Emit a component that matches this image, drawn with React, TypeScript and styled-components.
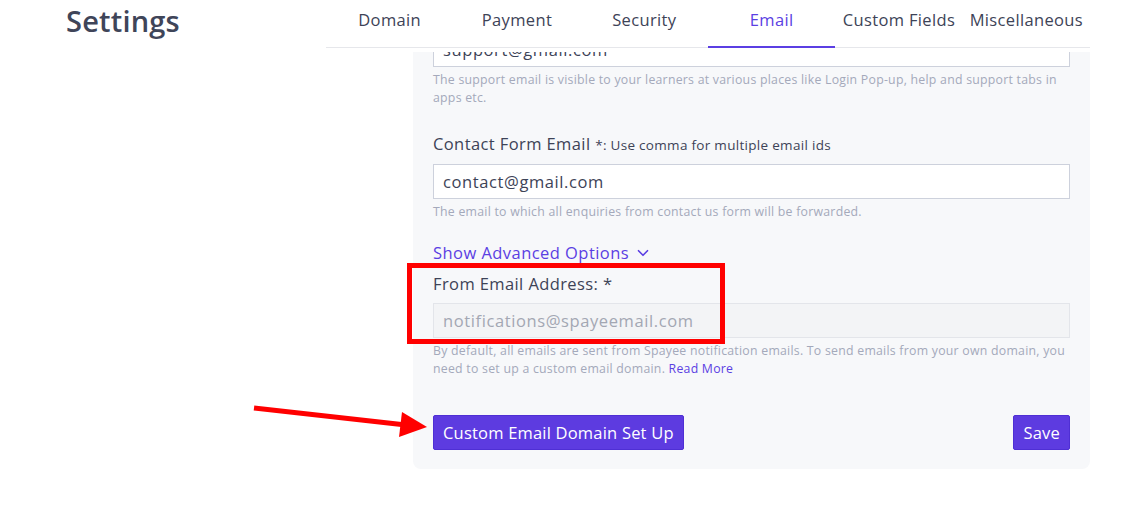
import React from "react";
import styled, { createGlobalStyle } from "styled-components";
import { ChevronDown } from "lucide-react";

const GlobalStyle = createGlobalStyle`
  body {
    margin: 0;
    background: #ffffff;
    font-family: "Open Sans", "Liberation Sans", sans-serif;
    color: #3d4357;
  }
  * {
    box-sizing: border-box;
  }
`;

const Page = styled.div`
  position: relative;
  display: flex;
  width: 1132px;
  height: 505px;
  overflow: hidden;
`;

const Side = styled.div`
  width: 326px;
  flex-shrink: 0;
  padding-left: 66px;
`;

const Title = styled.h1`
  margin: 0;
  padding-top: 1px;
  font-size: 29px;
  line-height: 40px;
  font-weight: 600;
  letter-spacing: 0.2px;
  color: #3f4559;
`;

const Main = styled.div`
  width: 764px;
  display: flex;
  flex-direction: column;
`;

const Tabs = styled.div`
  display: grid;
  grid-template-columns: repeat(6, 1fr);
  height: 48px;
  border-bottom: 1px solid #e6e7eb;
`;

const Tab = styled.div<{ active?: boolean }>`
  display: flex;
  align-items: flex-start;
  justify-content: center;
  padding-top: 8px;
  font-size: 16.5px;
  line-height: 24px;
  letter-spacing: 0.35px;
  white-space: nowrap;
  color: ${(p) => (p.active ? "#5b3fe3" : "#3d4357")};
  border-bottom: 2px solid ${(p) => (p.active ? "#5b3fe3" : "transparent")};
  margin-bottom: -1px;
`;

const Panel = styled.div`
  margin: 4px 0 0 87px;
  height: 417px;
  background: #f7f8fa;
  border-radius: 0 0 8px 8px;
  padding: 0 20px 20px;
  overflow: hidden;
  display: flex;
  flex-direction: column;
`;

const Field = styled.div<{ gap?: number }>`
  display: flex;
  flex-direction: column;
  margin-top: ${(p) => p.gap ?? 0}px;
`;

const Label = styled.label`
  font-size: 16.5px;
  line-height: 24px;
  letter-spacing: 0.4px;
  color: #3d4357;
  padding-top: 1px;
  margin-bottom: 7px;
`;

const LabelNote = styled.span`
  font-size: 13.5px;
  letter-spacing: 0.3px;
`;

const Input = styled.div<{ disabled?: boolean }>`
  height: 35px;
  display: flex;
  align-items: center;
  padding: 0 9px;
  font-size: 16.5px;
  letter-spacing: 0.6px;
  background: ${(p) => (p.disabled ? "#f3f4f6" : "#ffffff")};
  border: 1px solid ${(p) => (p.disabled ? "#e3e5ea" : "#cdd1dc")};
  color: ${(p) => (p.disabled ? "#a3a7b3" : "#3d4357")};
  white-space: nowrap;
`;

const Help = styled.p`
  margin: 4px 0 0;
  font-size: 12.3px;
  line-height: 18px;
  letter-spacing: 0.25px;
  color: #a4a9bb;
`;

const Link = styled.a`
  color: #5b3fe3;
  text-decoration: none;
`;

const Toggle = styled.div`
  display: flex;
  align-items: center;
  gap: 5px;
  margin-top: 20px;
  font-size: 16.5px;
  line-height: 24px;
  letter-spacing: 0.45px;
  color: #5b3fe3;
`;

const Actions = styled.div`
  display: flex;
  justify-content: space-between;
  margin-top: 37px;
`;

const Button = styled.button`
  height: 35px;
  padding: 0 9px;
  font-family: inherit;
  font-size: 16.5px;
  font-weight: 500;
  letter-spacing: 0.2px;
  color: #ffffff;
  background: #5d3be0;
  border: 1px solid #4f2fd4;
  border-radius: 2px;
`;

const Highlight = styled.div`
  position: absolute;
  left: 407px;
  top: 263px;
  width: 318px;
  height: 81px;
  border: 5px solid #ff0000;
  pointer-events: none;
`;

const Arrow = styled.svg`
  position: absolute;
  left: 250px;
  top: 398px;
  pointer-events: none;
`;

export default function App() {
  return (
    <>
      <GlobalStyle />
      <Page>
        <Side>
          <Title>Settings</Title>
        </Side>
        <Main>
          <Tabs>
            <Tab>Domain</Tab>
            <Tab>Payment</Tab>
            <Tab>Security</Tab>
            <Tab active>Email</Tab>
            <Tab>Custom Fields</Tab>
            <Tab>Miscellaneous</Tab>
          </Tabs>
          <Panel>
            <Field gap={-20}>
              <Input>support@gmail.com</Input>
              <Help>
                The support email is visible to your learners at various places like Login Pop-up, help and support tabs in
                apps etc.
              </Help>
            </Field>
            <Field gap={24}>
              <Label>
                Contact Form Email <LabelNote>*: Use comma for multiple email ids</LabelNote>
              </Label>
              <Input>contact@gmail.com</Input>
              <Help>The email to which all enquiries from contact us form will be forwarded.</Help>
            </Field>
            <Toggle>
              Show Advanced Options <ChevronDown size={18} strokeWidth={2.2} />
            </Toggle>
            <Field gap={6}>
              <Label>From Email Address: *</Label>
              <Input disabled>notifications@spayeemail.com</Input>
              <Help>
                By default, all emails are sent from Spayee notification emails. To send emails from your own domain, you
                need to set up a custom email domain. <Link href="#">Read More</Link>
              </Help>
            </Field>
            <Actions>
              <Button>Custom Email Domain Set Up</Button>
              <Button>Save</Button>
            </Actions>
          </Panel>
        </Main>
        <Highlight />
        <Arrow width="182" height="42" viewBox="0 0 182 42">
          <line x1="4" y1="10" x2="156" y2="27" stroke="#ff0000" strokeWidth="5" />
          <polygon points="177,29 152,14 149,39" fill="#ff0000" />
        </Arrow>
      </Page>
    </>
  );
}
